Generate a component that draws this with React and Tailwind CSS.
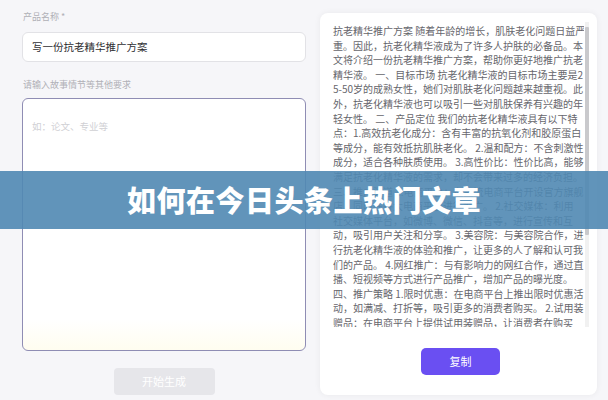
import React from "react";

const lines = [
  "抗老精华推广方案 随着年龄的增长，肌肤老化问题日益严",
  "重。因此，抗老化精华液成为了许多人护肤的必备品。本",
  "文将介绍一份抗老精华推广方案，帮助你更好地推广抗老",
  "精华液。 一、目标市场 抗老化精华液的目标市场主要是2",
  "5-50岁的成熟女性，她们对肌肤老化问题越来越重视。此",
  "外，抗老化精华液也可以吸引一些对肌肤保养有兴趣的年",
  "轻女性。 二、产品定位 我们的抗老化精华液具有以下特",
  "点：1.高效抗老化成分：含有丰富的抗氧化剂和胶原蛋白",
  "等成分，能有效抵抗肌肤老化。 2.温和配方：不含刺激性",
  "成分，适合各种肤质使用。 3.高性价比：性价比高，能够",
  "满足抗老化精华液的需求，却不会带来过多的经济负担。",
  "三、推广渠道 1.电商平台：在主流电商平台开设官方旗舰",
  "店，同时在各大电商平台进行推广。 2.社交媒体：利用",
  "社交媒体平台，如微博、微信、抖音等，进行宣传和互",
  "动，吸引用户关注和分享。 3.美容院：与美容院合作，进",
  "行抗老化精华液的体验和推广，让更多的人了解和认可我",
  "们的产品。 4.网红推广：与有影响力的网红合作，通过直",
  "播、短视频等方式进行产品推广，增加产品的曝光度。",
  "四、推广策略 1.限时优惠：在电商平台上推出限时优惠活",
  "动，如满减、打折等，吸引更多的消费者购买。 2.试用装",
  "赠品：在电商平台上提供试用装赠品，让消费者在购买",
];

const font = { fontFamily: '"Noto Sans CJK SC", "Noto Sans", sans-serif' };

export default function App() {
  return (
    <div
      className="relative w-[608px] h-[400px] overflow-hidden bg-[#f6f6f9] flex"
      style={font}
    >
      {/* form column */}
      <div className="w-[320px] pl-[22px] pr-[14px] pt-[10px] flex flex-col">
        <div className="text-[9px] leading-[14px] text-[#b0b0b6] pl-[1px]">产品名称 *</div>
        <div className="mt-2 h-[30px] rounded-[6px] border border-[#e2e2e6] bg-white flex items-center px-[9px]">
          <span className="text-[10.5px] text-[#2f2f33]">写一份抗老精华推广方案</span>
        </div>
        <div className="mt-4 text-[9px] leading-[14px] text-[#b0b0b6] pl-[1px]">
          请输入故事情节等其他要求
        </div>
        <div className="mt-[6px] h-[253px] rounded-[6px] border border-[#8f8db4] bg-[linear-gradient(to_bottom,#ffffff_88%,#fffdf0)] px-[9px] pt-[12px]">
          <span className="text-[9.5px] text-[#d0d0d4]">如：论文、专业等</span>
        </div>
        <div className="mt-[17px] flex justify-center">
          <div className="w-[101px] h-[27px] rounded-[4px] bg-[#e6e6ea] flex items-center justify-center text-[11px] text-white">
            开始生成
          </div>
        </div>
      </div>

      {/* result card */}
      <div className="mt-[13px] w-[277px] h-[382px] rounded-[8px] bg-white shadow-[0_0_6px_rgba(0,0,0,0.06)] flex flex-col pl-[13px] pt-[9px]">
        <div className="flex h-[305px] overflow-hidden">
          <div className="w-[251px] overflow-hidden text-[10px] leading-[14.6px] text-[#66666c] whitespace-nowrap pt-[2px]">
            {lines.map((l, i) => (
              <div key={i}>{l}</div>
            ))}
          </div>
          <div className="ml-[1px] w-[4px] h-full bg-[#f1f1f1] flex flex-col">
            <div className="mt-[5px] h-[208px] bg-[#c9c9cc] rounded-[1px]"></div>
          </div>
        </div>
        <div className="mt-[21px] flex justify-center pr-[9px]">
          <div className="w-[79px] h-[27px] rounded-[5px] bg-[#6a4ff2] flex items-center justify-center text-[11px] text-white">
            复制
          </div>
        </div>
      </div>

      {/* title banner */}
      <div className="absolute left-0 top-[171px] w-full h-[58px] bg-[#5088b3]/90 flex items-center justify-center">
        <span className="text-[29px] font-black text-white tracking-[0.5px]">如何在今日头条上热门文章</span>
      </div>
    </div>
  );
}
